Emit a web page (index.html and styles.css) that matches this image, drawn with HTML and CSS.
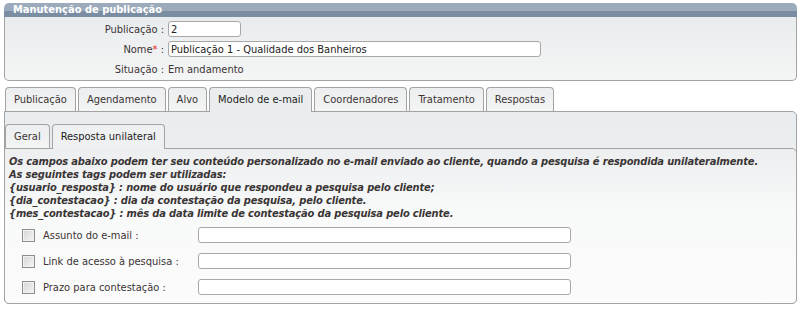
FILE: index.html
```html
<!DOCTYPE html>
<html lang="pt-BR">
<head>
	<meta charset="UTF-8">
	<title>Manutenção de publicação</title>
	<link rel="stylesheet" href="styles.css">
</head>
<body>
	<div class="box">
		<div class="box-head">Manutenção de publicação</div>
		<div class="box-body">
			<div class="row">
				<label class="label">Publicação :</label>
				<input class="field small" type="text" value="2">
			</div>
			<div class="row">
				<label class="label">Nome<span class="req">*</span> :</label>
				<input class="field wide" type="text" value="Publicação 1 - Qualidade dos Banheiros">
			</div>
			<div class="row">
				<label class="label">Situação :</label>
				<span class="value">Em andamento</span>
			</div>
		</div>
	</div>

	<ul class="tabs">
		<li>Publicação</li>
		<li>Agendamento</li>
		<li>Alvo</li>
		<li class="active">Modelo de e-mail</li>
		<li>Coordenadores</li>
		<li>Tratamento</li>
		<li>Respostas</li>
	</ul>
	<div class="tabpanel">
		<ul class="tabs sub">
			<li>Geral</li>
			<li class="active">Resposta unilateral</li>
		</ul>
		<div class="subpanel">
			<p class="hint">
				Os campos abaixo podem ter seu conteúdo personalizado no e-mail enviado ao cliente, quando a pesquisa é respondida unilateralmente.<br>
				As seguintes tags podem ser utilizadas:<br>
				{usuario_resposta} : nome do usuário que respondeu a pesquisa pelo cliente;<br>
				{dia_contestacao} : dia da contestação da pesquisa, pelo cliente.<br>
				{mes_contestacao} : mês da data limite de contestação da pesquisa pelo cliente.
			</p>
			<div class="opt">
				<input class="check" type="checkbox">
				<label class="opt-label">Assunto do e-mail :</label>
				<input class="field opt-field" type="text">
			</div>
			<div class="opt">
				<input class="check" type="checkbox">
				<label class="opt-label">Link de acesso à pesquisa :</label>
				<input class="field opt-field" type="text">
			</div>
			<div class="opt">
				<input class="check" type="checkbox">
				<label class="opt-label">Prazo para contestação :</label>
				<input class="field opt-field" type="text">
			</div>
		</div>
	</div>
</body>
</html>
```

FILE: styles.css
```css
* {
	box-sizing: border-box;
}

body {
	margin: 0;
	padding: 3px 4px 0;
	font-family: "DejaVu Sans Condensed", "DejaVu Sans", sans-serif;
	font-size: 11px;
	color: #3b3434;
	background: #fff;
}

.box-head {
	height: 14px;
	padding-left: 9px;
	border-radius: 5px 5px 0 0;
	background: linear-gradient(#9cabbb 0, #9cabbb 8px, #7b8da3 8px, #7b8da3 100%);
	color: #fff;
	font-weight: bold;
	line-height: 14px;
}

.box-body {
	padding: 2px 0 1px;
	border: 1px solid #a3a3a3;
	border-top: none;
	border-radius: 0 0 5px 5px;
	background: linear-gradient(#e9ecee, #f4f5f5);
}

.row {
	display: flex;
	align-items: center;
	height: 20px;
}

.label {
	width: 163px;
	padding-right: 4px;
	text-align: right;
}

.req {
	color: #e02020;
}

.field {
	height: 16px;
	padding: 0 2px;
	border: 1px solid #a8a8a8;
	border-radius: 3px;
	background: #fff;
	font: inherit;
	color: #222;
	outline: none;
}

.small {
	width: 73px;
}

.wide {
	width: 373px;
}

.tabs {
	display: flex;
	gap: 2px;
	margin: 6px 0 0 1px;
	padding: 0;
	list-style: none;
}

.tabs li {
	position: relative;
	height: 24px;
	padding: 0 8px;
	border: 1px solid #a3a3a3;
	border-bottom: none;
	border-radius: 4px 4px 0 0;
	background: linear-gradient(#eceeef, #f3f4f4);
	line-height: 23px;
	color: #3b3434;
}

.tabs li.active {
	height: 25px;
	margin-bottom: -1px;
	background: #eaedee;
	color: #222;
	z-index: 1;
}

.tabpanel {
	border: 1px solid #a3a3a3;
	border-radius: 0 5px 5px 5px;
	background: linear-gradient(#e9ecee, #f6f7f7);
	padding-top: 12px;
}

.tabs.sub {
	margin: 0;
}

.tabs.sub li.active {
	background: #eef0f1;
}

.subpanel {
	margin: 0 -1px -1px -1px;
	padding: 6px 4px 3px;
	border: 1px solid #a3a3a3;
	border-radius: 0 5px 5px 5px;
	background: linear-gradient(#eceef0, #f8f9f9 40%, #fbfbfb);
}

.hint {
	margin: 0 0 2px;
	font-weight: bold;
	font-style: italic;
	line-height: 13px;
	letter-spacing: -0.15px;
	color: #3a3535;
}

.opt {
	display: flex;
	align-items: center;
	height: 26px;
}

.check {
	appearance: none;
	width: 13px;
	height: 13px;
	margin: 0 8px 0 13px;
	border: 1px solid #8d8d8d;
	background: linear-gradient(135deg, #d6d6d6, #f4f4f4);
	box-shadow: inset 0 0 0 1px #f2f2f2;
}

.opt-label {
	width: 155px;
}

.opt-field {
	width: 373px;
}
```
